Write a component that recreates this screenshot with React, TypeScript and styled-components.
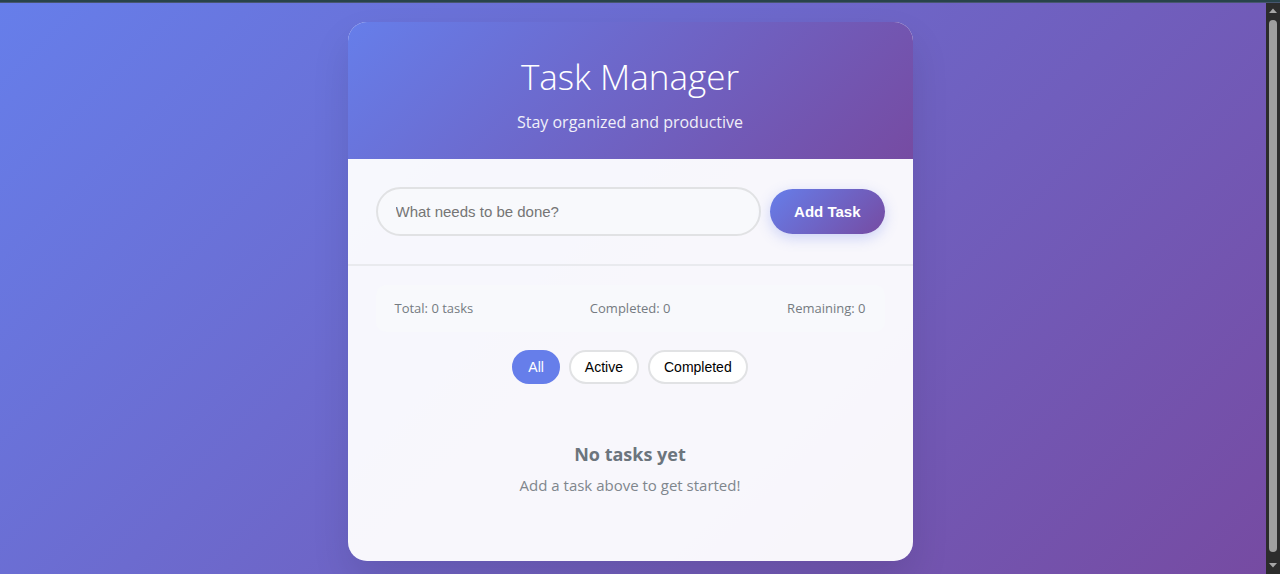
import React, { useState } from "react";
import styled, { createGlobalStyle } from "styled-components";

const uiFont = `"Segoe UI", "Open Sans", "Noto Sans", sans-serif`;
const controlFont = `"Liberation Sans", Arial, sans-serif`;
const brandGradient = "linear-gradient(135deg, #667eea 0%, #764ba2 100%)";

const GlobalStyle = createGlobalStyle`
  *, *::before, *::after { box-sizing: border-box; }
  body { margin: 0; font-family: ${uiFont}; }
  h1, h2, p { margin: 0; }
`;

const Window = styled.div`
  display: flex;
  flex-direction: column;
  min-height: 100vh;
`;

const TopEdge = styled.div`
  height: 3px;
  background: #28434a;
  border-bottom: 1px solid #47566f;
`;

const Viewport = styled.div`
  flex: 1;
  display: flex;
`;

const Page = styled.main`
  flex: 1;
  display: flex;
  justify-content: center;
  align-items: flex-start;
  padding: 19px 25px 13px 19px;
  background: ${brandGradient};
`;

const Card = styled.section`
  width: 100%;
  max-width: 565px;
  overflow: hidden;
  border-radius: 19px;
  background: rgba(255, 255, 255, 0.95);
  box-shadow: 0 19px 38px rgba(0, 0, 0, 0.1);
`;

const Header = styled.header`
  padding: 30px 28px 26px;
  text-align: center;
  color: #fff;
  background: ${brandGradient};
`;

const Title = styled.h1`
  margin-bottom: 9px;
  font-size: 35px;
  font-weight: 300;
  line-height: 50px;
`;

const Tagline = styled.p`
  font-size: 16px;
  line-height: 22px;
  opacity: 0.9;
`;

const AddForm = styled.form`
  display: flex;
  align-items: center;
  gap: 9px;
  padding: 28px;
  border-bottom: 2px solid #e9eaee;
`;

const TaskInput = styled.input`
  flex: 1;
  min-width: 0;
  height: 49px;
  padding: 0 18px;
  border: 2px solid #e1e2e4;
  border-radius: 25px;
  outline: none;
  background: #f8f9fc;
  color: #333;
  font: 15px ${controlFont};
  &::placeholder { color: #757575; }
`;

const AddButton = styled.button`
  height: 45px;
  padding: 0 24px;
  border: 0;
  border-radius: 23px;
  background: ${brandGradient};
  box-shadow: 0 4px 14px rgba(102, 126, 234, 0.3);
  color: #fff;
  font: bold 15px ${controlFont};
  white-space: nowrap;
  cursor: pointer;
`;

const Content = styled.div`
  padding: 19px 28px 28px;
`;

const Stats = styled.div`
  display: flex;
  justify-content: space-between;
  padding: 14px 19px;
  border-radius: 10px;
  background: #f8f9fc;
  color: #757b81;
  font-size: 13px;
  line-height: 19px;
`;

const Filters = styled.div`
  display: flex;
  justify-content: center;
  gap: 9px;
  margin: 18px 0 19px;
`;

const FilterButton = styled.button<{ $active: boolean }>`
  height: 34px;
  padding: 0 14px;
  border: 2px solid ${(p) => (p.$active ? "#667eea" : "#e1e2e4")};
  border-radius: 19px;
  background: ${(p) => (p.$active ? "#667eea" : "#fff")};
  color: ${(p) => (p.$active ? "#fff" : "#000")};
  font: 14px ${controlFont};
  cursor: pointer;
`;

const EmptyState = styled.div`
  padding: 38px 19px 37px;
  text-align: center;
  color: #6c757d;
`;

const EmptyTitle = styled.h2`
  margin-bottom: 7px;
  font-size: 18px;
  line-height: 26px;
`;

const EmptyText = styled.p`
  font-size: 15px;
  line-height: 22px;
  color: #7f868d;
`;

const ScrollTrack = styled.div`
  width: 14px;
  display: flex;
  flex-direction: column;
  align-items: center;
  gap: 6px;
  padding: 5px 0 6px;
  background: #2c2c2c;
`;

const ScrollThumb = styled.div`
  flex: 1;
  width: 8px;
  margin-bottom: 4px;
  border-radius: 4px;
  background: #9f9f9f;
`;

const Arrow = ({ down = false }: { down?: boolean }) => (
  <svg width="10" height="6" viewBox="0 0 10 6" aria-hidden="true">
    <path d={down ? "M1 1h8L5 5.5z" : "M1 5h8L5 .5z"} fill="#a6a6a6" />
  </svg>
);

const filters = ["All", "Active", "Completed"];

export default function App() {
  const [filter, setFilter] = useState("All");
  return (
    <Window>
      <GlobalStyle />
      <TopEdge />
      <Viewport>
        <Page>
          <Card>
            <Header>
              <Title>Task Manager</Title>
              <Tagline>Stay organized and productive</Tagline>
            </Header>
            <AddForm onSubmit={(e) => e.preventDefault()}>
              <TaskInput type="text" aria-label="New task" placeholder="What needs to be done?" />
              <AddButton type="submit">Add Task</AddButton>
            </AddForm>
            <Content>
              <Stats>
                <span>Total: 0 tasks</span>
                <span>Completed: 0</span>
                <span>Remaining: 0</span>
              </Stats>
              <Filters>
                {filters.map((name) => (
                  <FilterButton
                    key={name}
                    type="button"
                    $active={name === filter}
                    aria-pressed={name === filter}
                    onClick={() => setFilter(name)}
                  >
                    {name}
                  </FilterButton>
                ))}
              </Filters>
              <EmptyState>
                <EmptyTitle>No tasks yet</EmptyTitle>
                <EmptyText>Add a task above to get started!</EmptyText>
              </EmptyState>
            </Content>
          </Card>
        </Page>
        <ScrollTrack>
          <Arrow />
          <ScrollThumb />
          <Arrow down />
        </ScrollTrack>
      </Viewport>
    </Window>
  );
}
